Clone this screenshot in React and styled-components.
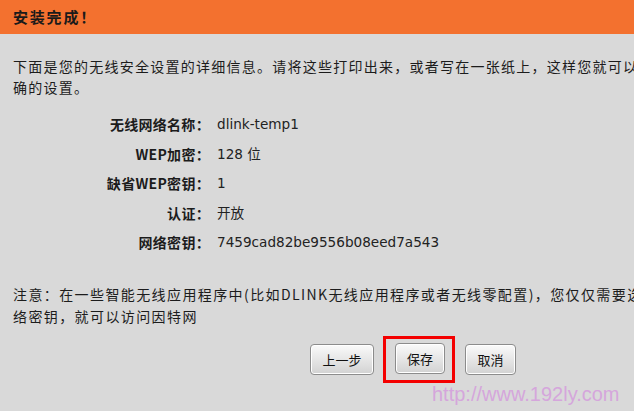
import React from 'react';
import styled, { createGlobalStyle } from 'styled-components';

const GlobalStyle = createGlobalStyle`
  html, body {
    margin: 0;
    padding: 0;
    background: #d9d9d9;
  }
  body {
    font-family: 'Noto Sans CJK SC', 'DejaVu Sans', sans-serif;
    color: #1c1c1c;
  }
`;

const rows = [
  { label: '无线网络名称', value: 'dlink-temp1' },
  { label: 'WEP加密', value: '128 位' },
  { label: '缺省WEP密钥', value: '1' },
  { label: '认证', value: '开放' },
  { label: '网络密钥', value: '7459cad82be9556b08eed7a543' },
];

function App() {
  return (
    <Page>
      <GlobalStyle />
      <Header>安装完成！</Header>
      <Content>
        <Paragraph>
          <Line>下面是您的无线安全设置的详细信息。请将这些打印出来，或者写在一张纸上，这样您就可以保存正</Line>
          <Line>确的设置。</Line>
        </Paragraph>
        <InfoTable>
          {rows.map((row) => (
            <React.Fragment key={row.label}>
              <Label>{row.label}：</Label>
              <Value>{row.value}</Value>
            </React.Fragment>
          ))}
        </InfoTable>
        <Note>
          <Line>注意：在一些智能无线应用程序中(比如DLINK无线应用程序或者无线零配置)，您仅仅需要选择网</Line>
          <Line>络密钥，就可以访问因特网</Line>
        </Note>
        <ButtonBar>
          <Button $width={64}>上一步</Button>
          <Highlight>
            <Button $width={50}>保存</Button>
          </Highlight>
          <Button $width={51}>取消</Button>
        </ButtonBar>
      </Content>
      <Watermark>http://www.192ly.com</Watermark>
    </Page>
  );
}

const Page = styled.div`
  position: relative;
  width: 634px;
  height: 411px;
  overflow: hidden;
  background: #d9d9d9;
`;
const Header = styled.div`
  height: 34px;
  line-height: 34px;
  background: #f3712f;
  padding-left: 13px;
  font-size: 15px;
  font-weight: bold;
  letter-spacing: 1.8px;
  color: #1a1a1a;
`;
const Content = styled.div`
  padding: 22px 0 0 13px;
`;
const Paragraph = styled.div`
  font-size: 14px;
  line-height: 21px;
  letter-spacing: 1.25px;
`;
const Line = styled.div`
  white-space: nowrap;
`;
const InfoTable = styled.div`
  display: grid;
  grid-template-columns: 197px 1fr;
  column-gap: 7px;
  margin-top: 12px;
`;
const Label = styled.div`
  height: 29.5px;
  line-height: 29.5px;
  text-align: right;
  font-size: 14px;
  font-weight: bold;
  letter-spacing: 0.3px;
`;
const Value = styled.div`
  height: 29.5px;
  line-height: 29.5px;
  font-family: 'DejaVu Sans', 'Noto Sans CJK SC', sans-serif;
  font-size: 13.6px;
  color: #222;
`;
const Note = styled.div`
  margin-top: 25px;
  font-size: 14px;
  line-height: 22px;
  letter-spacing: 1.4px;
`;
const ButtonBar = styled.div`
  display: flex;
  align-items: center;
  margin-top: 9px;
  padding-left: 297px;
`;
const Button = styled.button`
  width: ${(p) => p.$width}px;
  height: 31px;
  padding: 0;
  border: 1px solid #8c8c8c;
  border-radius: 4px;
  background: linear-gradient(#fafafa, #e4e4e4 55%, #d2d2d2);
  box-shadow: inset 0 0 0 1px #ffffff;
  font-family: 'Noto Sans CJK SC', sans-serif;
  font-size: 13px;
  color: #111;
`;
const Highlight = styled.div`
  display: flex;
  margin: 0 10px 0 9px;
  padding: 4px 7px 6px 9px;
  border: 3px solid #f40000;
`;
const Watermark = styled.div`
  position: absolute;
  left: 432px;
  top: 383px;
  font-family: 'Liberation Sans', Arial, sans-serif;
  font-size: 20px;
  color: #d5a6dc;
  white-space: nowrap;
`;

export default App;
